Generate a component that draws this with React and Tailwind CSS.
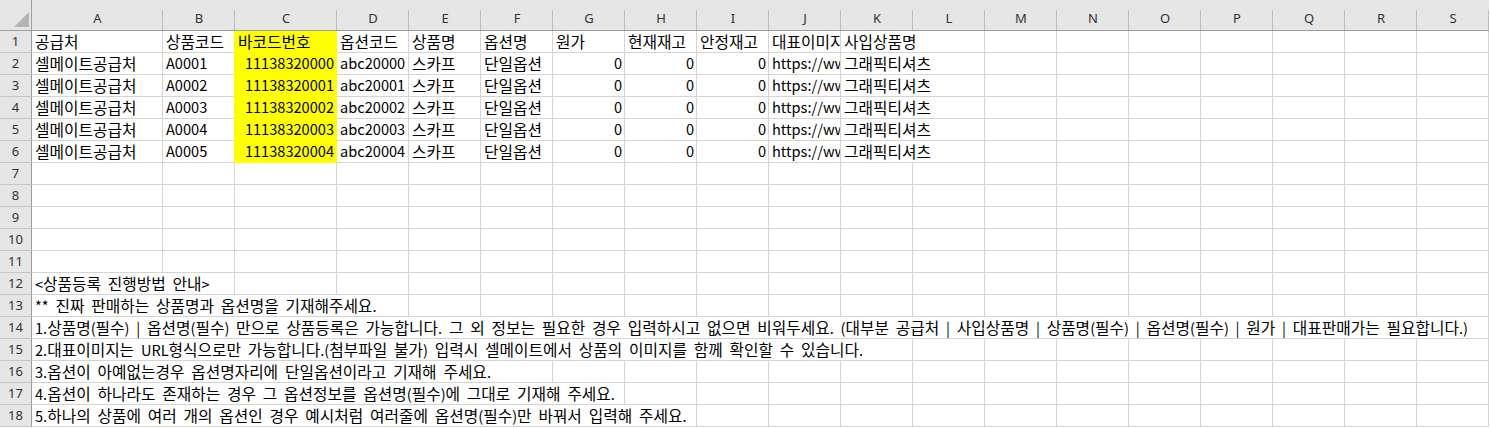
import React from "react";

const cols = ["A", "B", "C", "D", "E", "F", "G", "H", "I", "J", "K", "L", "M", "N", "O", "P", "Q", "R", "S"];

const dataRows = [
  ["셀메이트공급처", "A0001", "11138320000", "abc20000", "스카프", "단일옵션", "0", "0", "0", "https://ww", "그래픽티셔츠"],
  ["셀메이트공급처", "A0002", "11138320001", "abc20001", "스카프", "단일옵션", "0", "0", "0", "https://ww", "그래픽티셔츠"],
  ["셀메이트공급처", "A0003", "11138320002", "abc20002", "스카프", "단일옵션", "0", "0", "0", "https://ww", "그래픽티셔츠"],
  ["셀메이트공급처", "A0004", "11138320003", "abc20003", "스카프", "단일옵션", "0", "0", "0", "https://ww", "그래픽티셔츠"],
  ["셀메이트공급처", "A0005", "11138320004", "abc20004", "스카프", "단일옵션", "0", "0", "0", "https://ww", "그래픽티셔츠"],
];

const header = ["공급처", "상품코드", "바코드번호", "옵션코드", "상품명", "옵션명", "원가", "현재재고", "안정재고", "대표이미지", "사입상품명"];

// note rows: text + how many columns the text spills over
const notes = [
  ["<상품등록 진행방법 안내>", 2],
  ["** 진짜 판매하는 상품명과 옵션명을 기재해주세요.", 4],
  ["1.상품명(필수) | 옵션명(필수) 만으로 상품등록은 가능합니다. 그 외 정보는 필요한 경우 입력하시고 없으면 비워두세요. (대부분 공급처 | 사입상품명 | 상품명(필수) | 옵션명(필수) | 원가 | 대표판매가는 필요합니다.)", 19],
  ["2.대표이미지는 URL형식으로만 가능합니다.(첨부파일 불가) 입력시 셀메이트에서 상품의 이미지를 함께 확인할 수 있습니다.", 11],
  ["3.옵션이 아예없는경우 옵션명자리에 단일옵션이라고 기재해 주세요.", 6],
  ["4.옵션이 하나라도 존재하는 경우 그 옵션정보를 옵션명(필수)에 그대로 기재해 주세요.", 7],
  ["5.하나의 상품에 여러 개의 옵션인 경우 예시처럼 여러줄에 옵션명(필수)만 바꿔서 입력해 주세요.", 8],
];

const spanClass = {
  2: "col-span-2",
  4: "col-span-4",
  6: "col-span-6",
  7: "col-span-7",
  8: "col-span-8",
  11: "col-span-11",
  19: "col-span-19",
};

// hangul glyphs run a bit narrow in Noto CJK, so bump them up to match Malgun widths
function K({ children }) {
  if (!children) return null;
  return String(children)
    .split(/([\uAC00-\uD7A3\u3131-\u318E]+)/)
    .map((part, i) =>
      i % 2 ? (
        <span key={i} className="text-[15.75px]">
          {part}
        </span>
      ) : (
        part
      )
    );
}

function RowHead({ n }) {
  return (
    <div className="h-[22px] flex items-center justify-center border-r border-b border-r-[#9e9e9e] border-b-[#c6c6c6] bg-[#e6e6e6] text-[13px] text-[#333] font-['Noto_Sans',sans-serif]">
      {n}
    </div>
  );
}

function Cell({ text, right, yellow, nextYellow, span2 }) {
  return (
    <div
      className={
        "h-[22px] flex items-center whitespace-nowrap overflow-hidden border-r border-b px-[3px] " +
        (right ? "justify-end pr-[2px] " : "") +
        (yellow ? "bg-[#ffff00] border-[#ffff00] " : "border-[#d4d4d4] ") +
        (nextYellow ? "border-r-[#ffff00] " : "") +
        (span2 ? "col-span-2 " : "")
      }
    >
      <K>{text}</K>
    </div>
  );
}

export default function App() {
  return (
    <div className="w-[1490px] h-[428px] bg-white overflow-hidden font-['Noto_Sans_CJK_KR',sans-serif] text-[14.6px] text-black leading-none [word-spacing:3.5px]">
      <div className="grid grid-cols-[32px_131px_72px_102px_72px_72px_72px_72px_72px_72px_72px_72px_72px_72px_72px_72px_72px_72px_72px_72px]">
        {/* column headers */}
        <div className="h-[31px] bg-[#e6e6e6] border-b border-r border-[#9e9e9e] relative">
          <svg width="32" height="30" className="absolute left-0 top-0">
            <polygon points="29,12 29,27 14,27" fill="#b4b4b4" />
          </svg>
        </div>
        {cols.map((c) => (
          <div
            key={c}
            className="h-[31px] bg-[#e6e6e6] border-b border-[#9e9e9e] relative flex items-center justify-center pt-[6px] text-[13px] text-[#333] font-['Noto_Sans',sans-serif] after:absolute after:right-0 after:top-[10px] after:bottom-0 after:w-px after:bg-[#bcbcbc]"
          >
            {c}
          </div>
        ))}

        {/* row 1 */}
        <RowHead n={1} />
        {header.map((t, i) => (
          <Cell key={i} text={t} yellow={i === 2} nextYellow={i === 1} span2={i === 10} />
        ))}
        {cols.slice(12).map((c) => (
          <Cell key={c} />
        ))}

        {/* rows 2-6 */}
        {dataRows.map((r, ri) => (
          <React.Fragment key={ri}>
            <RowHead n={ri + 2} />
            {r.map((t, i) => (
              <Cell
                key={i}
                text={t}
                right={i === 2 || i === 6 || i === 7 || i === 8}
                yellow={i === 2}
                nextYellow={i === 1}
                span2={i === 10}
              />
            ))}
            {cols.slice(12).map((c) => (
              <Cell key={c} />
            ))}
          </React.Fragment>
        ))}

        {/* rows 7-11 empty */}
        {[7, 8, 9, 10, 11].map((n) => (
          <React.Fragment key={n}>
            <RowHead n={n} />
            {cols.map((c) => (
              <Cell key={c} />
            ))}
          </React.Fragment>
        ))}

        {/* rows 12-18 notes */}
        {notes.map(([t, span], i) => (
          <React.Fragment key={i}>
            <RowHead n={i + 12} />
            <div className={spanClass[span] + " h-[22px] flex items-center whitespace-nowrap border-r border-b border-[#d4d4d4] px-[3px]"}>
              <span>
                <K>{t}</K>
              </span>
            </div>
            {cols.slice(span).map((c) => (
              <Cell key={c} />
            ))}
          </React.Fragment>
        ))}
      </div>
    </div>
  );
}
